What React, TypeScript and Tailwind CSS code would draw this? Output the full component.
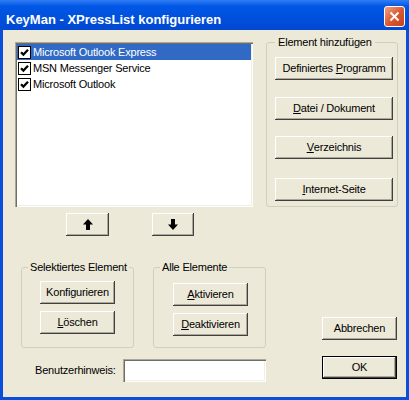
import React from "react";

type BtnProps = { children: React.ReactNode; className?: string };

// Classic raised push button, face in the XP dialog beige
function Btn({ children, className = "" }: BtnProps) {
  return (
    <button
      type="button"
      className={
        "flex items-center justify-center bg-[#ece9d8] text-[11px] leading-[13px] tracking-[-0.2px] text-black shadow-[inset_-1px_-1px_0_#404040,inset_1px_1px_0_#ffffff,inset_-2px_-2px_0_#aca899] " +
        className
      }
    >
      {children}
    </button>
  );
}

function CheckBox() {
  return (
    <span className="ml-[1px] flex h-[13px] w-[13px] shrink-0 items-center justify-center border border-black bg-white">
      <svg width="9" height="9" viewBox="0 0 9 9" aria-hidden="true">
        <path d="M1 4.2 L3.4 6.6 L8 1.8" stroke="#000" strokeWidth="2.2" fill="none" />
      </svg>
    </span>
  );
}

function ArrowUp() {
  return (
    <svg width="10" height="11" viewBox="0 0 10 11" aria-hidden="true">
      <path d="M5 0 L10 5.5 L7 5.5 L7 11 L3 11 L3 5.5 L0 5.5 Z" fill="#000" />
    </svg>
  );
}

function ArrowDown() {
  return (
    <svg width="10" height="11" viewBox="0 0 10 11" aria-hidden="true">
      <path d="M5 11 L10 5.5 L7 5.5 L7 0 L3 0 L3 5.5 L0 5.5 Z" fill="#000" />
    </svg>
  );
}

const items = ["Microsoft Outlook Express", "MSN Messenger Service", "Microsoft Outlook"];

export default function App() {
  return (
    <div className="flex h-[400px] w-[409px] flex-col overflow-hidden bg-[#0a4fdc] font-['Liberation_Sans',Arial,sans-serif]">
      {/* Title bar */}
      <div className="flex h-[30px] shrink-0 items-start justify-between bg-linear-to-b from-[#2f7cf5] from-0% via-[#0058e6] via-20% to-[#0048d2] pl-[6px] pr-[4px]">
        <span className="pt-[12px] text-[13px] font-bold leading-[15px] text-white">
          KeyMan - XPressList konfigurieren
        </span>
        <div className="mt-[6px] flex h-[21px] w-[21px] items-center justify-center rounded-[3px] border border-white bg-linear-to-br from-[#f0a084] via-[#dc5a32] to-[#c4401c]">
          <svg width="11" height="11" viewBox="0 0 11 11" aria-hidden="true">
            <path d="M1.5 1.5 L9.5 9.5 M9.5 1.5 L1.5 9.5" stroke="#fff" strokeWidth="2" />
          </svg>
        </div>
      </div>

      {/* Dialog body */}
      <div className="mx-[3px] mb-[3px] flex flex-1 flex-col bg-[#ece9d8] text-[11px] leading-[13px] tracking-[-0.2px] text-black">
        {/* List + add group */}
        <div className="flex items-start pl-[12px] pt-[6px]">
          <div className="mt-[6px] flex w-[238px] flex-col">
            <div className="h-[165px] bg-white p-[2px] shadow-[inset_1px_1px_0_#aca899,inset_2px_2px_0_#716f64,inset_-1px_-1px_0_#ffffff,inset_-2px_-2px_0_#f1efe2]">
              {items.map((t, i) => (
                <div
                  key={t}
                  className={
                    "flex h-[16px] items-center " +
                    (i === 0 ? "bg-[#316ac5] text-white" : "text-black")
                  }
                >
                  <CheckBox />
                  <span className="ml-[2px] whitespace-nowrap">{t}</span>
                </div>
              ))}
            </div>
            <div className="mt-[6px] flex">
              <Btn className="ml-[51px] h-[23px] w-[43px]">
                <ArrowUp />
              </Btn>
              <Btn className="ml-[43px] h-[23px] w-[42px]">
                <ArrowDown />
              </Btn>
            </div>
          </div>

          <fieldset className="ml-[13px] h-[171px] w-[132px] rounded-[3px] border border-[#d0d0bf] pl-[8px]">
            <legend className="px-[3px] leading-[13px]">Element hinzufügen</legend>
            <Btn className="mt-[8px] h-[23px] w-[118px]">
              Definiertes&nbsp;<u>P</u>rogramm
            </Btn>
            <Btn className="mt-[17px] h-[23px] w-[118px]">
              <u>D</u>atei / Dokument
            </Btn>
            <Btn className="mt-[16px] h-[23px] w-[118px]">
              <u>V</u>erzeichnis
            </Btn>
            <Btn className="mt-[19px] h-[23px] w-[118px]">
              <u>I</u>nternet-Seite
            </Btn>
          </fieldset>
        </div>

        {/* Group boxes + cancel */}
        <div className="mt-[25px] flex items-start pl-[18px]">
          <fieldset className="h-[87px] w-[113px] rounded-[3px] border border-[#d0d0bf] pl-[6px]">
            <legend className="px-[2px] leading-[13px]">Selektiertes Element</legend>
            <Btn className="ml-[12px] mt-[7px] h-[23px] w-[75px]">Konfigurieren</Btn>
            <Btn className="ml-[12px] mt-[7px] h-[23px] w-[75px]">
              <u>L</u>öschen
            </Btn>
          </fieldset>

          <fieldset className="ml-[19px] h-[87px] w-[113px] rounded-[3px] border border-[#d0d0bf] pl-[6px]">
            <legend className="px-[2px] leading-[13px]">Alle Elemente</legend>
            <Btn className="ml-[13px] mt-[9px] h-[23px] w-[75px]">
              <u>A</u>ktivieren
            </Btn>
            <Btn className="ml-[13px] mt-[7px] h-[23px] w-[75px]">
              <u>D</u>eaktivieren
            </Btn>
          </fieldset>

          <Btn className="ml-[56px] mt-[56px] h-[23px] w-[75px]">Abbrechen</Btn>
        </div>

        {/* Note field + OK */}
        <div className="mt-[8px] flex items-start">
          <span className="ml-[32px] mt-[8px] w-[88px] leading-[13px]">Benutzerhinweis:</span>
          <div className="mt-[3px] h-[23px] w-[143px] bg-white shadow-[inset_1px_1px_0_#aca899,inset_2px_2px_0_#716f64,inset_-1px_-1px_0_#ffffff,inset_-2px_-2px_0_#f1efe2]" />
          <Btn className="ml-[56px] h-[23px] w-[75px] border border-black">OK</Btn>
        </div>
      </div>
    </div>
  );
}
